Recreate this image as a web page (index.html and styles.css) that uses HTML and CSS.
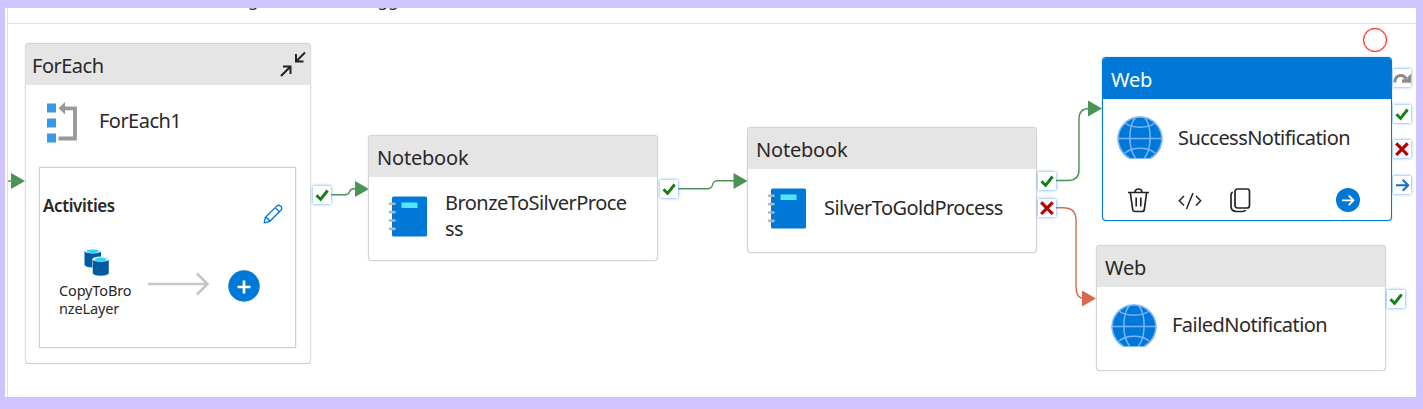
FILE: index.html
```html
<!DOCTYPE html>
<html lang="en">
<head>
<meta charset="utf-8">
<title>Pipeline</title>
<link rel="stylesheet" href="styles.css">
</head>
<body>
<svg width="0" height="0" class="defs">
  <symbol id="check" viewBox="0 0 18 18"><path d="M3.500 9.200 7.600 13.400 14.600 4.500" fill="none" stroke="#138013" stroke-width="2.900"/></symbol>
  <symbol id="cross" viewBox="0 0 18 18"><path d="M3.200 3.300 14.700 15M14.700 3.300 3.200 15" fill="none" stroke="#b50000" stroke-width="3.200"/></symbol>
  <symbol id="next" viewBox="0 0 18 18"><path d="M3 9.300H15.300M9.700 3.800 15.200 9.300 9.700 14.800" fill="none" stroke="#1470c6" stroke-width="2"/></symbol>
  <symbol id="skip" viewBox="0 0 18 18"><path d="M1.700 13.500C2.500 5 10.500 4.500 13.500 10.500" fill="none" stroke="#8c8c8c" stroke-width="3"/><path d="M9 13.800H18V4.800L14.500 8.300V10.300H9Z" fill="#8c8c8c"/></symbol>
  <symbol id="notebook" viewBox="0 0 40 42"><rect x="4" y="1.500" width="35" height="40" rx="1.500" fill="#0078d7"/><rect x="13.500" y="7.500" width="16" height="5.500" fill="#50e6ff"/><path d="M2 8.700H6.500M2 17.100H6.500M2 25.500H6.500M2 33.900H6.500" stroke="#b5b5b5" stroke-width="2.600" stroke-linecap="round"/></symbol>
  <symbol id="globe" viewBox="0 0 46 43"><path d="M12 42.500A22.300 22.300 0 1 1 34 42.500Z" fill="#0078d7"/><g fill="none" stroke="#76b4ff" stroke-width="1.500"><path d="M12.500 42A21.800 21.800 0 1 1 33.500 42"/><path d="M1 22.600H45M8 7C15 12.500 31 12.500 38 7M8 37C15 30.500 31 30.500 38 37"/><path d="M18.500 42C11 33 11 10 18.500 1.500M27.500 42C35 33 35 10 27.500 1.500"/></g></symbol>
</svg>
<div class="frame">
  <div class="topbar"><span class="tail">g</span><span class="tail second">gg</span></div>
  <main class="canvas">
    <svg class="wires" width="1423" height="409" viewBox="0 0 1423 409">
      <g fill="none" stroke="#4c9356" stroke-width="1.400">
        <path d="M8 181H12"/>
        <path d="M331 194.800H345C352 194.800 347 188.800 354 188.800H357"/>
        <path d="M678 188.800H707C716 188.800 709 180.800 718 180.800H735"/>
        <path d="M1056 180.500H1068Q1079 180.500 1079 170V119Q1079 108.500 1089 108.500"/>
      </g>
      <path d="M1056 207.800H1063Q1076 207.800 1076 220V286Q1076 298.500 1084 298.500" fill="none" stroke="#d86b4c" stroke-width="1.400"/>
      <path d="M11 173 25 181 11 189ZM355 181 369 189 355 197ZM733.500 173 747.500 181 733.500 189ZM1088 100.500 1102 108.500 1088 116.500Z" fill="#4c9356"/>
      <path d="M1082 290.500 1096 298.500 1082 306.500Z" fill="#d86b4c"/>
    </svg>

    <section class="node foreach">
      <header class="head"><span class="t-foreach">ForEach</span>
        <svg class="collapse" width="26" height="26" viewBox="0 0 26 26" fill="none" stroke="#222" stroke-width="2"><path d="M25 1.500 16 10.500M16 3V10.500H23.500M1 25 10 16M3 15.500H10.500V23"/></svg>
      </header>
      <div class="main-row">
        <svg width="32" height="41" viewBox="0 0 32 41"><path d="M1 1.500H10V10.500H1ZM1 16.500H10V25.500H1ZM1 31.500H10V40.500H1Z" fill="#3999e5"/><path d="M18 6.300H29V36.500H12.500" fill="none" stroke="#999" stroke-width="3.800"/><path d="M12.500 6.300 19 0V12.500Z" fill="#999"/></svg>
        <span class="name t-foreach1">ForEach1</span>
      </div>
      <div class="activities">
        <div class="act-head"><b>Activities</b>
          <svg width="20" height="20" viewBox="0 0 20 20" fill="none" stroke="#0078d7" stroke-width="1.300" stroke-linejoin="round"><path d="M1.200 18.800 2.300 13.500 13.700 2.100Q15.500.400 17.800 2.200 19.600 4.400 17.900 6.300L6.500 17.700ZM2.300 13.500Q5.500 14 6.500 17.700M12.200 3.600 16.400 7.800"/></svg>
        </div>
        <div class="act-body">
          <div class="copy">
            <svg width="26" height="28" viewBox="0 0 26 28"><path d="M.500 3V16.500Q1 19.500 9 19.500 17 19 17 16.500V3Z" fill="#005ba1"/><ellipse cx="8.800" cy="3" rx="8.300" ry="2.500" fill="#e6f5fa"/><ellipse cx="8.800" cy="3.200" rx="6" ry="1.700" fill="#32d4f5"/><path d="M8.500 11V25Q9 28 17 28 25 27.500 25 25V11Z" fill="#005ba1" stroke="#fff" stroke-width=".5"/><ellipse cx="16.800" cy="11.200" rx="8.300" ry="2.600" fill="#e6f5fa"/><ellipse cx="16.800" cy="11.400" rx="6" ry="1.800" fill="#32d4f5"/></svg>
            <span>CopyToBro<br>nzeLayer</span>
          </div>
          <svg class="long" width="63" height="24" viewBox="0 0 63 24" fill="none" stroke="#c8c6c4" stroke-width="2.600"><path d="M1 12H60M50 1.500 60.500 12 50 22.500"/></svg>
          <svg class="add" width="32" height="32" viewBox="0 0 32 32"><circle cx="16" cy="16" r="15.700" fill="#0078d7"/><path d="M9.500 17H22.500M16 10.500V23.500" stroke="#fff" stroke-width="2.700"/></svg>
        </div>
      </div>
    </section>

    <section class="node notebook1">
      <header class="head"><span class="t-notebook">Notebook</span></header>
      <div class="body"><svg width="40" height="42"><use href="#notebook"/></svg><span class="name">BronzeToSilverProce<br>ss</span></div>
    </section>

    <section class="node notebook2">
      <header class="head"><span class="t-notebook">Notebook</span></header>
      <div class="body"><svg width="40" height="42"><use href="#notebook"/></svg><span class="name">SilverToGoldProcess</span></div>
    </section>

    <section class="node web1">
      <header class="head"><span class="t-notebook">Web</span></header>
      <div class="body web-body"><svg width="46" height="43"><use href="#globe"/></svg><span class="name">SuccessNotification</span></div>
      <div class="tools">
        <svg width="23" height="25" viewBox="0 0 23 25" fill="none" stroke="#242424" stroke-width="1.700" stroke-linejoin="round"><path d="M1 4.500H22M8 4Q8.300 1 11.500 1 14.700 1 15 4M3.300 4.500 5.700 21.500Q6 23.500 8 23.500H15Q17 23.500 17.300 21.500L19.700 4.500M9.200 9.500V18.500M13.800 9.500V18.500"/></svg>
        <svg class="code" width="24" height="18" viewBox="0 0 24 18" fill="none" stroke="#242424" stroke-width="1.500"><path d="M6 4 1.300 8.800 6 13.600M18 4 22.700 8.800 18 13.600M15 1 8.500 17"/></svg>
        <svg class="dup" width="21" height="25" viewBox="0 0 21 25" fill="none" stroke="#242424" stroke-width="1.700"><rect x="5" y="1" width="14.500" height="19" rx="2.500"/><path d="M2.700 4Q1 5 1 7V18Q1 23.500 6.500 23.500H12.500Q15 23.500 15.500 22"/></svg>
        <svg class="go" width="24" height="24" viewBox="0 0 24 24"><circle cx="12" cy="12" r="12" fill="#0078d7"/><path d="M6 12.300H17M12.700 7.500 17.500 12.300 12.700 17.100" fill="none" stroke="#fff" stroke-width="1.800"/></svg>
      </div>
    </section>

    <section class="node web2">
      <header class="head"><span class="t-notebook">Web</span></header>
      <div class="body web-body"><svg width="46" height="43"><use href="#globe"/></svg><span class="name">FailedNotification</span></div>
    </section>

    <svg class="port p1"><use href="#check"/></svg>
    <svg class="port p2"><use href="#check"/></svg>
    <svg class="port p3"><use href="#check"/></svg>
    <svg class="port p4"><use href="#cross"/></svg>
    <svg class="port p5"><use href="#skip"/></svg>
    <svg class="port p6"><use href="#check"/></svg>
    <svg class="port p7"><use href="#cross"/></svg>
    <svg class="port p8"><use href="#next"/></svg>
    <svg class="port p9"><use href="#check"/></svg>
    <div class="breakpoint"></div>
  </main>
</div>
</body>
</html>
```
FILE: styles.css
```css
* { box-sizing: border-box; }
body {
  margin: 0;
  width: 1423px;
  height: 409px;
  overflow: hidden;
  background: #cfc4ff;
  font-family: "Noto Sans", "Open Sans", sans-serif;
  color: #292827;
}
svg { display: block; flex: none; }
.defs { position: absolute; }
.frame {
  margin: 8px 7px 0 5px;
  height: 389px;
  background: #fff;
  overflow: hidden;
}
.topbar {
  height: 16px;
  margin-left: 2px;
  border-left: 1px solid #e1e1e1;
  border-bottom: 1px solid #e1e1e1;
  overflow: hidden;
  padding-left: 240px;
  display: flex;
  font-size: 17px;
  line-height: 17px;
}
.tail { margin-top: -17px; height: 17px; }
.second { margin-left: 119px; }
.canvas {
  height: 373px;
  margin-left: 2px;
  border-left: 1px solid #e1e1e1;
}
.wires { position: absolute; left: 0; top: 0; }

.node {
  position: absolute;
  background: #fff;
  border: 1px solid #d4d4d4;
  box-shadow: 0 0 1px #bbb;
  border-radius: 4px;
  overflow: hidden;
  width: 290px;
  height: 126px;
}
.foreach { left: 25px; top: 43px; width: 286px; height: 321px; border-color: #dedede; border-top-color: #d4d4d4; border-bottom-color: #d0d0d0; }
.notebook1 { left: 368px; top: 135px; }
.notebook2 { left: 747px; top: 127px; }
.web1 { left: 1102px; top: 57px; height: 164px; border-color: #0078d7; box-shadow: 0 0 1px #0078d7; }
.web2 { left: 1096px; top: 245px; }
.head {
  height: 41px;
  padding: 0 4px 0 8px;
  display: flex;
  justify-content: space-between;
  background: #e5e5e5;
  font-size: 20px;
  line-height: 43px;
}
.foreach .head { padding-left: 6px; }
.web1 .head { background: #0078d7; color: #fff; }
.t-foreach { letter-spacing: -0.5px; }
.t-notebook { letter-spacing: -0.2px; }
.collapse { margin-top: 7px; }
.name { font-size: 20px; line-height: 26px; white-space: nowrap; letter-spacing: -0.54px; }
.body {
  height: 82px;
  padding: 0 0 4px 19px;
  display: flex;
  align-items: center;
  gap: 17px;
}
.web-body { padding: 0 0 6px 14px; gap: 15px; }
.web1 .name { margin-top: 1px; }
.main-row {
  height: 83px;
  padding: 0 0 8px 20px;
  display: flex;
  align-items: center;
  gap: 21px;
}
.t-foreach1 { margin-top: -4px; }
.activities {
  width: 257px;
  height: 181px;
  margin: -1px 0 0 13px;
  border: 1.500px solid #d0d0d0;
  box-shadow: 0 0 1px #bbb;
  font-size: 14px;
}
.act-head {
  height: 76px;
  padding: 36px 12px 0 3px;
  display: flex;
  justify-content: space-between;
}
.act-head b { font-size: 17px; line-height: 8px; margin-top: -2px; font-weight: 600; letter-spacing: -0.4px; }
.act-body { display: flex; padding-left: 19px; }
.copy {
  width: 88px;
  padding-top: 4px;
  display: flex;
  flex-direction: column;
  font-size: 14.500px;
  line-height: 18px;
  letter-spacing: -0.15px;
}
.copy svg { margin: 0 0 5px 25px; }
.long { margin-top: 28px; }
.add { margin: 26px 0 0 18px; }
.tools { display: flex; padding-left: 24px; margin-top: 7px; }
.code { margin: 4px 0 0 28px; }
.dup { margin-left: 28px; }
.go { margin-left: 85px; }

.port {
  position: absolute;
  width: 18px;
  height: 18px;
  background: #fff;
  box-shadow: 0 0 3px #4a9cf0;
}
.p1 { left: 313px; top: 186px; }
.p2 { left: 660px; top: 180px; }
.p3 { left: 1038px; top: 172px; }
.p4 { left: 1038px; top: 199px; }
.p5 { left: 1393px; top: 69px; }
.p6 { left: 1393px; top: 105px; }
.p7 { left: 1393px; top: 140px; }
.p8 { left: 1393px; top: 176px; }
.p9 { left: 1387px; top: 290px; }
.breakpoint {
  position: absolute;
  left: 1363px;
  top: 28px;
  width: 24px;
  height: 24px;
  border: 1px solid #ff1f1f;
  box-shadow: 0 0 1px #ff1f1f, inset 0 0 1px #ff1f1f;
  border-radius: 50%;
}
```
